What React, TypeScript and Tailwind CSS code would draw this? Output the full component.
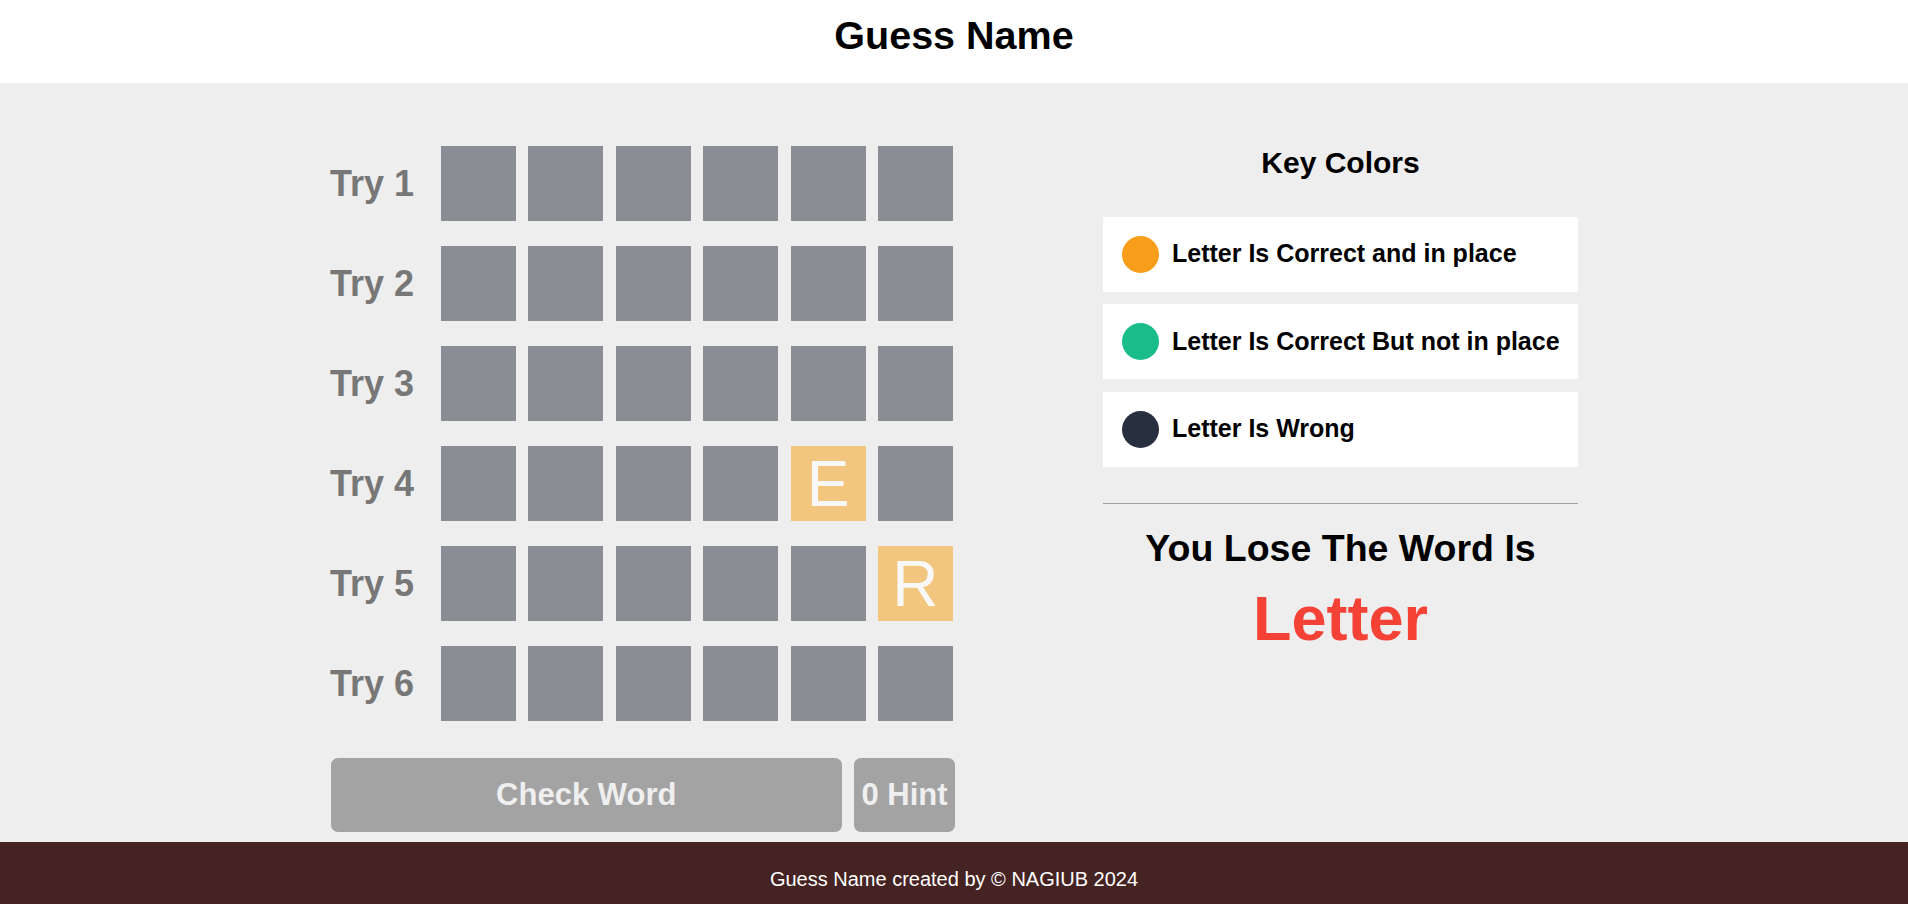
import React from "react";

const rows: (string | null)[][] = [
  [null, null, null, null, null, null],
  [null, null, null, null, null, null],
  [null, null, null, null, null, null],
  [null, null, null, null, "E", null],
  [null, null, null, null, null, "R"],
  [null, null, null, null, null, null],
];

const keys = [
  { color: "bg-[#f89e1a]", text: "Letter Is Correct and in place" },
  { color: "bg-[#1abc8a]", text: "Letter Is Correct But not in place" },
  { color: "bg-[#283040]", text: "Letter Is Wrong" },
];

export default function App() {
  return (
    <div className="w-full h-[904px] overflow-hidden flex flex-col font-['Liberation_Sans',Arial,sans-serif]">
      <header className="h-[83px] shrink-0 bg-white pt-[13px]">
        <h1 className="text-center text-[39.5px] leading-[44px] font-bold text-black">Guess Name</h1>
      </header>

      <main className="h-[759px] shrink-0 bg-[#eeeeee] pt-[63px]">
        <div className="flex justify-center gap-[148px]">
          {/* Left column */}
          <div className="w-[625px] flex flex-col">
            <div className="flex flex-col gap-[25px]">
              {rows.map((row, i) => (
                <div key={i} className="flex items-center">
                  <div className="w-[111px] text-[36px] font-bold text-[#777777] leading-none">
                    Try {i + 1}
                  </div>
                  <div className="flex gap-[12.4px]">
                    {row.map((l, j) => (
                      <div
                        key={j}
                        className={`w-[75px] h-[75px] flex items-center justify-center text-[64px] leading-none text-[#f8f8f8] ${
                          l ? "bg-[#f2c67e]" : "bg-[#8a8d94]"
                        }`}
                      >
                        {l}
                      </div>
                    ))}
                  </div>
                </div>
              ))}
            </div>
            <div className="flex gap-[12.5px] mt-[37px] pl-[1px]">
              <button className="w-[510.5px] h-[74px] rounded-[7px] bg-[#a3a3a3] text-[#efefef] text-[31px] font-bold flex items-center justify-center">
                Check Word
              </button>
              <button className="w-[101px] h-[74px] rounded-[7px] bg-[#a3a3a3] text-[#efefef] text-[31px] font-bold flex items-center justify-center px-0 whitespace-nowrap">
                0 Hint
              </button>
            </div>
          </div>

          {/* Right column */}
          <div className="w-[475px] flex flex-col">
            <h2 className="text-center text-[30px] leading-[34.5px] font-bold text-black">Key Colors</h2>
            <div className="flex flex-col gap-[12.5px] mt-[36px]">
              {keys.map((k) => (
                <div key={k.text} className="h-[75px] bg-white flex items-center pl-[19px] gap-[13px]">
                  <span className={`w-[37px] h-[37px] rounded-full shrink-0 ${k.color}`} />
                  <span className="text-[25px] font-bold text-black whitespace-nowrap">{k.text}</span>
                </div>
              ))}
            </div>
            <div className="h-px bg-[#a0a0a0] mt-[36px]" />
            <div className="mt-[23px] text-center text-[37.5px] leading-[42.5px] font-bold text-black">
              You Lose The Word Is
            </div>
            <div className="mt-[13px] text-center text-[63px] leading-[72.4px] font-bold text-[#f44336]">
              Letter
            </div>
          </div>
        </div>
      </main>

      <footer className="h-[62px] shrink-0 bg-[#452323] pt-[26px]">
        <p className="text-center text-white text-[20px] leading-[23px]">Guess Name created by © NAGIUB 2024</p>
      </footer>
    </div>
  );
}
